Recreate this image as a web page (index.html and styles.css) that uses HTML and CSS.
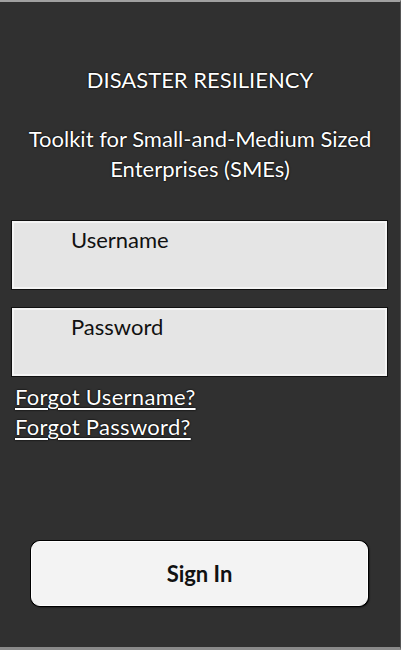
FILE: index.html
```html
<!DOCTYPE html>
<html>
<head>
<meta charset="utf-8">
<link rel="stylesheet" href="styles.css">
</head>
<body>
<div class="screen">
  <h1 class="title">DISASTER RESILIENCY</h1>
  <p class="subtitle">Toolkit for Small-and-Medium Sized<br>Enterprises (SMEs)</p>
  <div class="field"><span class="label">Username</span></div>
  <div class="field field-second"><span class="label">Password</span></div>
  <div class="links">
    <a class="link" href="#">Forgot Username?</a>
    <a class="link" href="#">Forgot Password?</a>
  </div>
  <div class="spacer"></div>
  <button class="signin">Sign In</button>
</div>
</body>
</html>
```
FILE: styles.css
```css
html, body {
  margin: 0;
  padding: 0;
  background: #2f2f2f;
}
.screen {
  box-sizing: border-box;
  width: 401px;
  height: 650px;
  background: #303030;
  border-top: 2px solid #a0a0a0;
  border-bottom: 3px solid #8a8a8a;
  border-right: 1px solid #555;
  display: flex;
  flex-direction: column;
  font-family: Lato, "Open Sans", sans-serif;
  color: #fff;
}
.title {
  margin: 66px 0 0;
  font-size: 22px;
  font-weight: 400;
  line-height: 24px;
  text-align: center;
  text-shadow: 0 0 2px #000, 0 0 1px #000;
}
.subtitle {
  margin: 32px 0 0;
  font-size: 22px;
  line-height: 30px;
  text-align: center;
  text-shadow: 0 0 2px #000, 0 0 1px #000;
}
.field {
  box-sizing: border-box;
  margin: 37px 0 0 12px;
  width: 375px;
  height: 68px;
  background: #e5e5e5;
  border: 2px solid #f4f4f4;
  box-shadow: 0 0 0 1px #111;
  padding: 4px 0 0 57px;
}
.field-second {
  margin-top: 19px;
}
.label {
  color: #111;
  font-size: 22px;
  line-height: 26px;
}
.links {
  margin: 6px 0 0 15px;
  display: flex;
  flex-direction: column;
  align-items: flex-start;
}
.link {
  color: #fff;
  font-size: 22px;
  line-height: 30px;
  letter-spacing: 0.3px;
  text-decoration: underline;
  text-decoration-thickness: 2px;
  text-underline-offset: 3px;
  text-shadow: 0 0 2px #000, 0 0 1px #000;
}
.spacer {
  flex: 1;
}
.signin {
  margin: 0 0 41px 31px;
  width: 337px;
  height: 65px;
  background: #f3f3f3;
  border: 1px solid #fff;
  border-radius: 9px;
  box-shadow: 0 0 0 1px #000, 1px 1px 2px #000;
  font-family: Lato, "Open Sans", sans-serif;
  font-weight: 700;
  font-size: 22px;
  color: #111;
  padding: 0;
}
```
